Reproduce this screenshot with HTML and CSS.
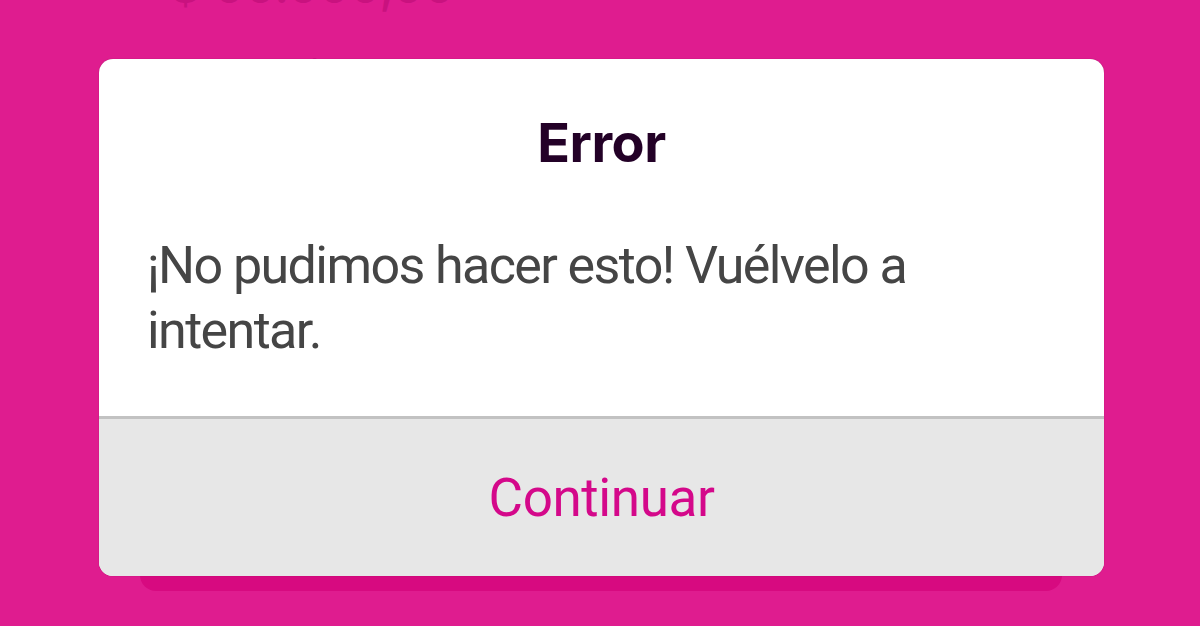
FILE: index.html
```html
<!DOCTYPE html>
<html lang="es">
<head>
<meta charset="utf-8">
<title>Error</title>
<link rel="stylesheet" href="styles.css">
</head>
<body>
<div class="page">
  <div class="amount">$ 00.000,00</div>
  <div class="label">Tiempo de</div>
  <div class="card"></div>
</div>
<div class="overlay">
  <div class="dialog">
    <div class="dialog-body">
      <h1 class="title">Error</h1>
      <p class="message">¡No pudimos hacer esto! Vuélvelo a intentar.</p>
    </div>
    <div class="dialog-footer">
      <button class="action">Continuar</button>
    </div>
  </div>
</div>
</body>
</html>
```
FILE: styles.css
```css
html, body {
  margin: 0;
  padding: 0;
}
body {
  width: 1200px;
  height: 626px;
  overflow: hidden;
  background: #df1c8f;
  font-family: Roboto, Inter, "Noto Sans", sans-serif;
  font-variant-ligatures: none;
  position: relative;
}
.page {
  padding: 0 138px 0 140px;
}
.amount {
  margin-top: -38px;
  padding-left: 30px;
  font-family: Inter, sans-serif;
  font-size: 48px;
  line-height: 48px;
  color: #c9127f;
  font-weight: 500;
}
.label {
  margin-top: 44px;
  padding-left: 28px;
  font-size: 36px;
  line-height: 40px;
  color: #c9127f;
}
.card {
  height: 525px;
  margin-top: -28px;
  background: #d70a80;
  border-radius: 16px;
}
.overlay {
  position: absolute;
  left: 99px;
  top: 59px;
  width: 1005px;
}
.dialog {
  background: #ffffff;
  border-radius: 14px;
  overflow: hidden;
  box-shadow: 0 0 1px rgba(80, 0, 40, 0.5);
}
.dialog-body {
  padding: 52px 48px 53px 48px;
  border-bottom: 3px solid #c2c2c2;
}
.title {
  margin: 0;
  font-family: Inter, sans-serif;
  font-size: 54px;
  line-height: 64px;
  font-weight: 700;
  text-align: center;
  color: #230127;
  letter-spacing: -0.5px;
}
.message {
  margin: 58px 0 0 0;
  font-size: 52px;
  line-height: 65px;
  font-weight: 400;
  color: #454545;
  letter-spacing: -1.6px;
}
.dialog-footer {
  height: 157px;
  background: #e7e7e7;
  display: flex;
  align-items: center;
  justify-content: center;
}
.action {
  border: 0;
  background: none;
  padding: 0;
  font-family: Roboto, Inter, sans-serif;
  font-size: 53px;
  line-height: 64px;
  letter-spacing: -0.4px;
  color: #d4088a;
  cursor: pointer;
}
```
